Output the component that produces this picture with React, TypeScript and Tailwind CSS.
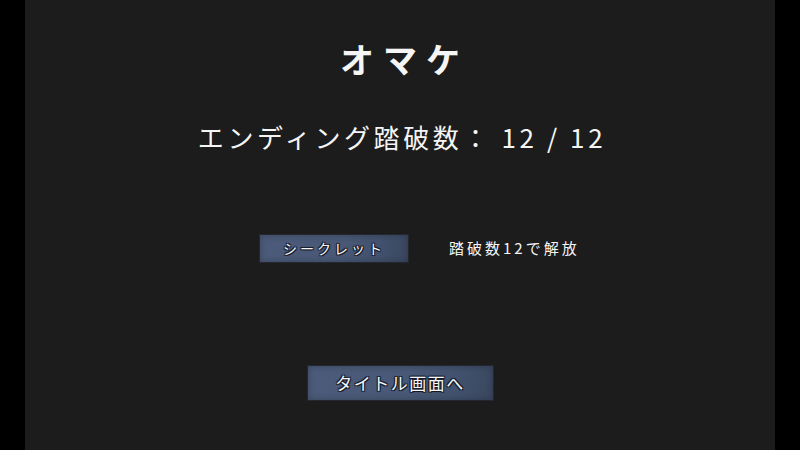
import React from 'react'

const jp = "font-['Noto_Sans_CJK_JP','Noto_Sans',sans-serif]"

// slate panel with a worn, grainy look
const panel =
  'border border-[#24272d] bg-[linear-gradient(100deg,#4b5b79_0%,#485876_55%,#42516d_80%,#3a475f_100%)] shadow-[inset_0_0_6px_rgba(20,25,35,0.35)]'

const outlined =
  '[text-shadow:0_0_2px_#141a26,1px_1px_0_#141a26,-1px_-1px_0_#1a2232,1px_-1px_0_#1a2232,-1px_1px_0_#1a2232]'

function MenuButton({ label, className }: { label: string; className: string }) {
  return (
    <button className={`${panel} ${className} flex items-center justify-center text-[#f4f6fa] ${outlined}`}>
      {label}
    </button>
  )
}

export default function App() {
  return (
    <div className={`flex h-[450px] w-[800px] bg-black ${jp}`}>
      <div className="w-[25px]" />
      <main className="flex flex-1 flex-col items-center bg-[#1c1c1c] text-[#f5f5f5]">
        <h1 className="mt-[42px] text-[34px] font-bold leading-none tracking-[9px] pl-[9px]">オマケ</h1>
        <p className="mt-[48px] text-[26px] leading-none tracking-[3.6px] pl-[4px]">エンディング踏破数： 12 / 12</p>

        <div className="mt-[84px] flex w-full items-center pl-[234px]">
          <MenuButton label="シークレット" className="h-[29px] w-[150px] text-[14px] tracking-[3px]" />
          <span className="ml-[40px] text-[15px] tracking-[3px]">踏破数12で解放</span>
        </div>

        <MenuButton label="タイトル画面へ" className="mt-[102px] h-[36px] w-[187px] text-[17px] tracking-[1.5px]" />
      </main>
      <div className="w-[25px]" />
    </div>
  )
}
